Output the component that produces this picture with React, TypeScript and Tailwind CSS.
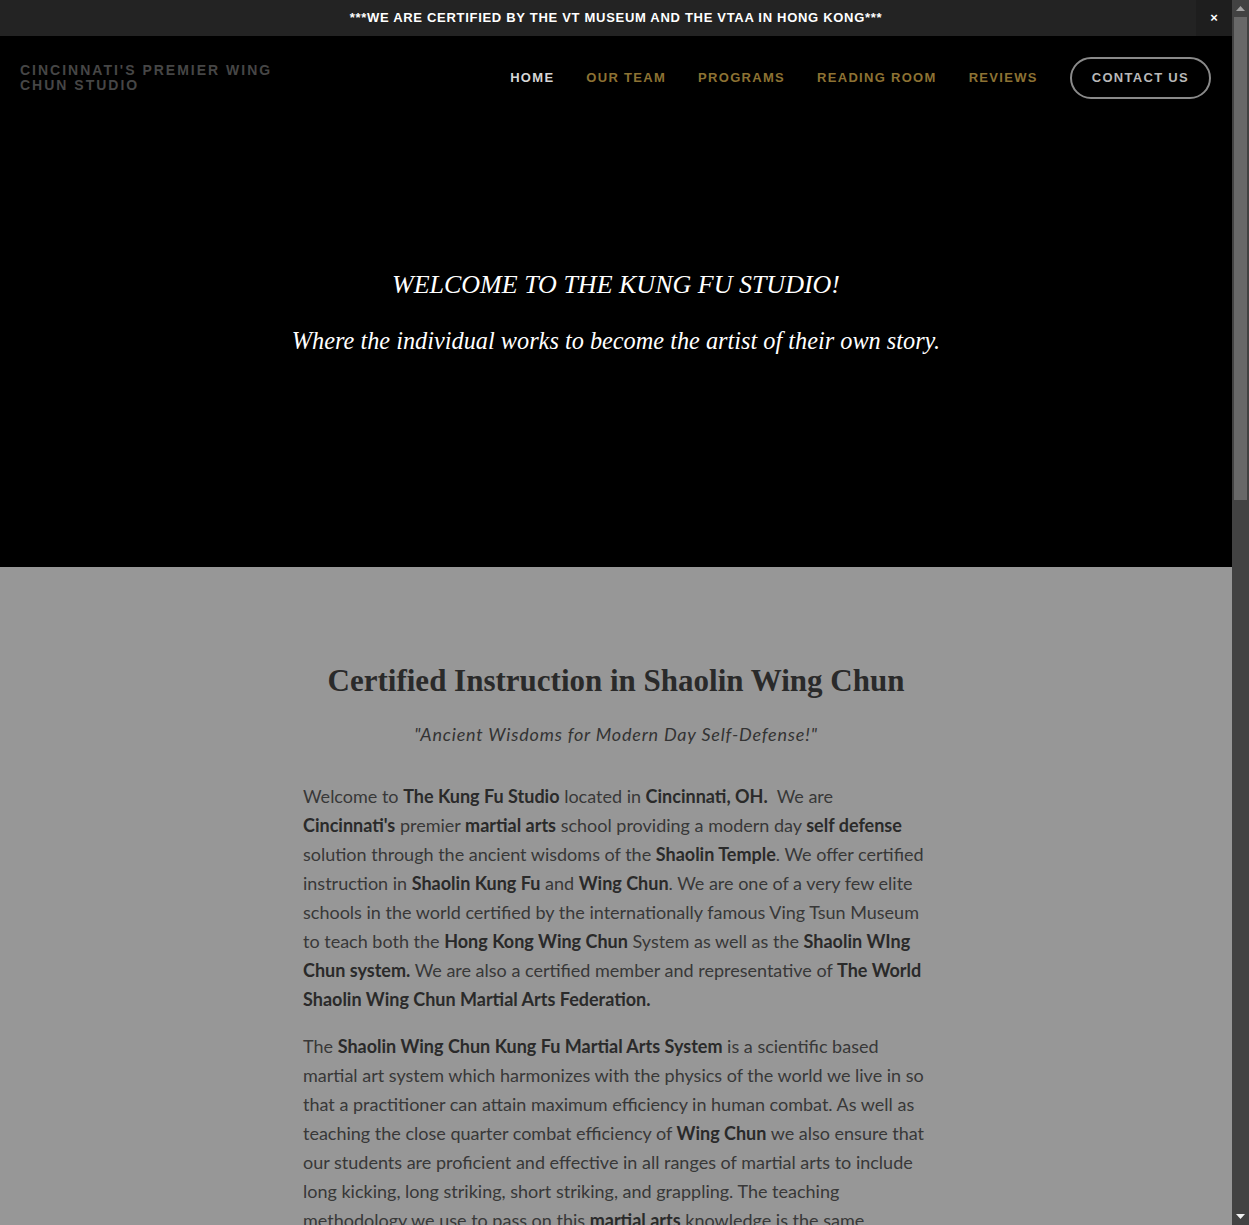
import React from "react"

const navLinks = ["OUR TEAM", "PROGRAMS", "READING ROOM", "REVIEWS"]

const B = ({ children }: { children: React.ReactNode }) => (
  <strong className="font-bold text-[#2a2a2a]">{children}</strong>
)

const AnnouncementBar = () => (
  <div className="relative flex h-9 items-center justify-center bg-[#232323]">
    <p className="font-['Liberation_Sans',sans-serif] text-[13px] font-bold tracking-[0.7px] text-white">
      ***WE ARE CERTIFIED BY THE VT MUSEUM AND THE VTAA IN HONG KONG***
    </p>
    <button className="absolute right-0 top-0 flex h-9 w-9 items-center justify-center bg-[#1e1e1e] font-['Liberation_Sans',sans-serif] text-[13px] font-bold text-white">
      ×
    </button>
  </div>
)

const Header = () => (
  <header className="flex h-[82px] items-start justify-between pl-5 pr-[21px] pt-5">
    <div className="mt-[7px] w-[262px] font-['Liberation_Sans',sans-serif] text-[14px] font-bold uppercase leading-[15px] tracking-[2px] text-[#464646]">
      Cincinnati's Premier Wing Chun Studio
    </div>
    <nav className="flex items-center gap-8 pt-px font-['Liberation_Sans',sans-serif] text-[13px] font-bold tracking-[1.3px]">
      <a className="text-[#d6d6d6]">HOME</a>
      {navLinks.map((l) => (
        <a key={l} className="text-[#8d7233]">
          {l}
        </a>
      ))}
      <a className="flex h-[42px] items-center rounded-full border-2 border-[#8a8a8a] px-5 text-[#b9b9b9]">
        CONTACT US
      </a>
    </nav>
  </header>
)

const Hero = () => (
  <section className="flex h-[449px] flex-col items-center pt-[149px] font-['Liberation_Serif',serif] italic text-white">
    <h2 className="text-[26px] leading-[36px]">WELCOME TO THE KUNG FU STUDIO!</h2>
    <p className="mt-[21px] text-[24.3px] leading-[34px]">
      Where the individual works to become the artist of their own story.
    </p>
  </section>
)

const Body = () => (
  <section className="bg-[#979797] pb-40 pt-[94px]">
    <div className="mx-auto w-[626px]">
      <h1 className="text-center font-['Liberation_Serif',serif] text-[31px] font-bold leading-[40px] text-[#2a2a2a]">
        Certified Instruction in Shaolin Wing Chun
      </h1>
      <p className="mt-[19px] text-center font-['Lato',sans-serif] text-[18px] italic leading-[28px] tracking-[0.8px] text-[#333]">
        "Ancient Wisdoms for Modern Day Self-Defense!"
      </p>
      <div className="mt-[34px] flex flex-col gap-[18px] font-['Lato',sans-serif] text-[18px] leading-[29px] text-[#383838]">
        <p>
          Welcome to <B>The Kung Fu Studio</B> located in <B>Cincinnati, OH.</B>&nbsp; We are{" "}
          <B>Cincinnati's</B> premier <B>martial arts</B> school providing a modern day{" "}
          <B>self defense</B> solution through the ancient wisdoms of the <B>Shaolin Temple</B>.
          We offer certified instruction in <B>Shaolin Kung Fu</B> and <B>Wing Chun</B>. We are
          one of a very few elite schools in the world certified by the internationally famous
          Ving Tsun Museum to teach both the <B>Hong Kong Wing Chun</B> System as well as the{" "}
          <B>Shaolin WIng Chun system.</B> We are also a certified member and representative of{" "}
          <B>The World Shaolin Wing Chun Martial Arts Federation.</B>
        </p>
        <p>
          The <B>Shaolin Wing Chun Kung Fu Martial Arts System</B> is a scientific based martial
          art system which harmonizes with the physics of the world we live in so that a
          practitioner can attain maximum efficiency in human combat. As well as teaching the
          close quarter combat efficiency of <B>Wing Chun</B> we also ensure that our students
          are proficient and effective in all ranges of martial arts to include long kicking,
          long striking, short striking, and grappling. The teaching methodology we use to pass
          on this <B>martial arts</B> knowledge is the same methodology that has been passed down
          from generation to generation by the masters of the <B>Shaolin Temple</B>.
        </p>
        <p>
          Our classes are open to adults and children of all experience levels. Whether you are
          looking to learn practical <B>self defense</B>, improve your health and fitness, or
          study a traditional art in depth, our instructors will guide you step by step through
          a structured curriculum built on forms, drills, partner work and applied technique.
        </p>
        <p>
          Every student progresses at their own pace. We believe that the practice of{" "}
          <B>Kung Fu</B> is a lifelong journey of self discovery, and that the discipline,
          patience and focus developed on the training floor carry over into every part of daily
          life.
        </p>
        <p>
          Come visit us for a free introductory class and experience the difference that
          authentic, certified instruction can make. We look forward to training with you at{" "}
          <B>The Kung Fu Studio</B>.
        </p>
      </div>
    </div>
    <div className="mx-auto mt-24 w-[626px] text-center font-['Lato',sans-serif] text-[16px] leading-[26px] text-[#333]">
      <p className="font-bold">The Kung Fu Studio</p>
      <p>Cincinnati, OH</p>
      <p>Certified by the Ving Tsun Museum and the VTAA</p>
    </div>
  </section>
)

// the window's dark scrollbar, as it shows in the picture
const ScrollBar = () => (
  <aside className="sticky top-0 flex h-screen w-[17px] shrink-0 flex-col bg-[#424242]">
    <div className="flex h-[17px] items-center justify-center">
      <svg width="9" height="5" viewBox="0 0 9 5">
        <path d="M4.5 0 L9 5 L0 5 Z" fill="#a3a3a3" />
      </svg>
    </div>
    <div className="mx-[2px] h-[483px] bg-[#686868]" />
    <div className="flex-1" />
    <div className="flex h-[17px] items-center justify-center">
      <svg width="9" height="5" viewBox="0 0 9 5">
        <path d="M0 0 L9 0 L4.5 5 Z" fill="#f2f2f2" />
      </svg>
    </div>
  </aside>
)

const App = () => {
  return (
    <div className="flex items-start bg-black">
      <main className="min-w-0 flex-1">
        <AnnouncementBar />
        <Header />
        <Hero />
        <Body />
        <div className="h-[560px] bg-[#979797]" />
      </main>
      <ScrollBar />
    </div>
  )
}

export default App
